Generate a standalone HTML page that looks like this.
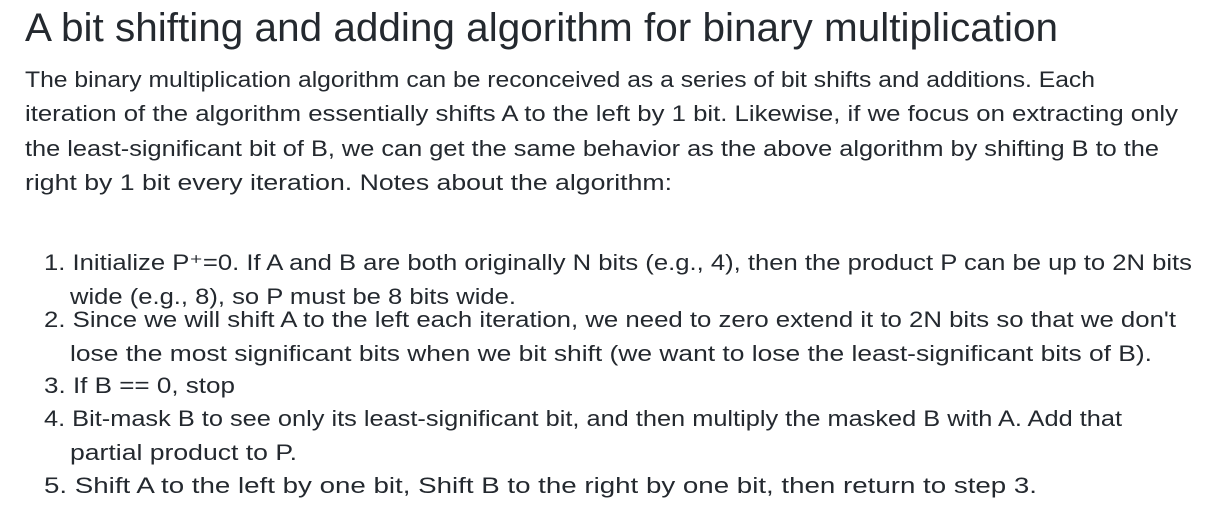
<!DOCTYPE html>
<html><head><meta charset="utf-8"><style>
html,body{margin:0;padding:0;background:#fff;width:1230px;height:532px;overflow:hidden}
svg text{font-family:"Liberation Sans",sans-serif;fill:#24292f}
</style></head><body>
<svg width="1230" height="532" xmlns="http://www.w3.org/2000/svg">
<text x="25" y="41" font-size="40" textLength="1033" lengthAdjust="spacingAndGlyphs">A bit shifting and adding algorithm for binary multiplication</text>
<text x="25" y="87" font-size="22" textLength="1070" lengthAdjust="spacingAndGlyphs">The binary multiplication algorithm can be reconceived as a series of bit shifts and additions. Each</text>
<text x="25" y="121" font-size="22" textLength="1153" lengthAdjust="spacingAndGlyphs">iteration of the algorithm essentially shifts A to the left by 1 bit. Likewise, if we focus on extracting only</text>
<text x="25" y="156" font-size="22" textLength="1134" lengthAdjust="spacingAndGlyphs">the least-significant bit of B, we can get the same behavior as the above algorithm by shifting B to the</text>
<text x="25" y="190" font-size="22" textLength="647" lengthAdjust="spacingAndGlyphs">right by 1 bit every iteration. Notes about the algorithm:</text>
<text x="44" y="270" font-size="22" textLength="1148" lengthAdjust="spacingAndGlyphs">1. Initialize P⁺=0. If A and B are both originally N bits (e.g., 4), then the product P can be up to 2N bits</text>
<text x="70" y="304" font-size="22" textLength="446" lengthAdjust="spacingAndGlyphs">wide (e.g., 8), so P must be 8 bits wide.</text>
<text x="44" y="327" font-size="22" textLength="1132" lengthAdjust="spacingAndGlyphs">2. Since we will shift A to the left each iteration, we need to zero extend it to 2N bits so that we don't</text>
<text x="70" y="361" font-size="22" textLength="1082" lengthAdjust="spacingAndGlyphs">lose the most significant bits when we bit shift (we want to lose the least-significant bits of B).</text>
<text x="44" y="393" font-size="22" textLength="191" lengthAdjust="spacingAndGlyphs">3. If B == 0, stop</text>
<text x="44" y="426" font-size="22" textLength="1078" lengthAdjust="spacingAndGlyphs">4. Bit-mask B to see only its least-significant bit, and then multiply the masked B with A. Add that</text>
<text x="70" y="460" font-size="22" textLength="227" lengthAdjust="spacingAndGlyphs">partial product to P.</text>
<text x="44" y="493" font-size="22" textLength="993" lengthAdjust="spacingAndGlyphs">5. Shift A to the left by one bit, Shift B to the right by one bit, then return to step 3.</text>
</svg>
</body></html>
